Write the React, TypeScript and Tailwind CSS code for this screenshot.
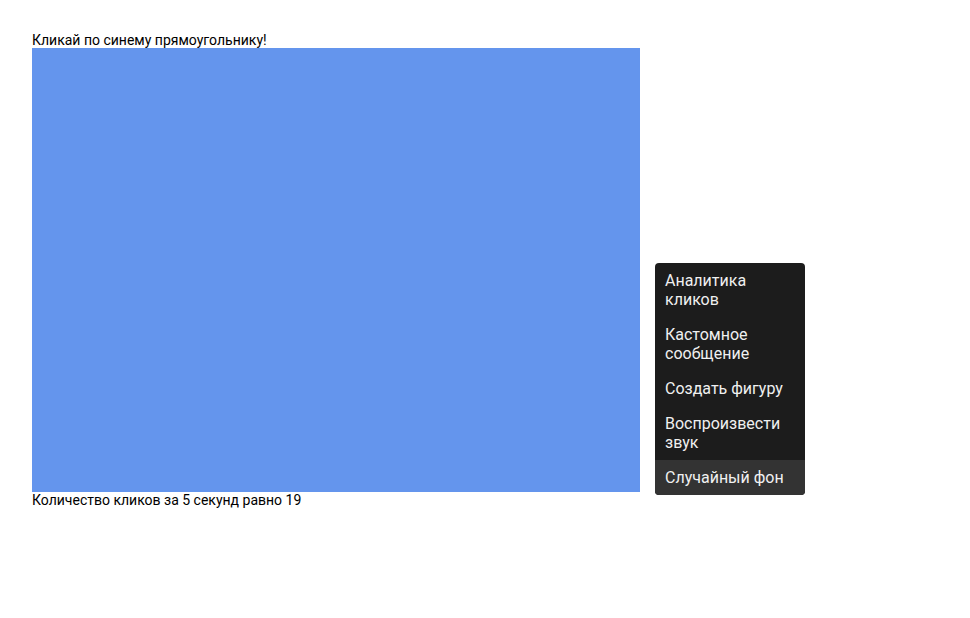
import { useState } from 'react';

const menuItems = [
  'Аналитика кликов',
  'Кастомное сообщение',
  'Создать фигуру',
  'Воспроизвести звук',
  'Случайный фон',
];

export default function App() {
  const [clicks] = useState(19);

  return (
    <div className="relative h-[618px] w-[970px] bg-white font-['Roboto',sans-serif] text-black">
      <div className="pl-8 pt-8">
        <p className="text-[14px] leading-[16px]">Кликай по синему прямоугольнику!</p>
        <div className="h-[444px] w-[608px] bg-[#6495ed]" />
        <p className="text-[14px] leading-[16px]">Количество кликов за 5 секунд равно {clicks}</p>
      </div>

      <ul className="absolute left-[655px] top-[263px] w-[150px] overflow-hidden rounded bg-[#1c1c1c] text-[16px] font-normal leading-[19px] text-[#f0f0f0]">
        {menuItems.map((item, i) => (
          <li
            key={item}
            className={`px-2.5 py-2 ${i === menuItems.length - 1 ? 'bg-[#333333]' : ''}`}
          >
            {item}
          </li>
        ))}
      </ul>
    </div>
  );
}
